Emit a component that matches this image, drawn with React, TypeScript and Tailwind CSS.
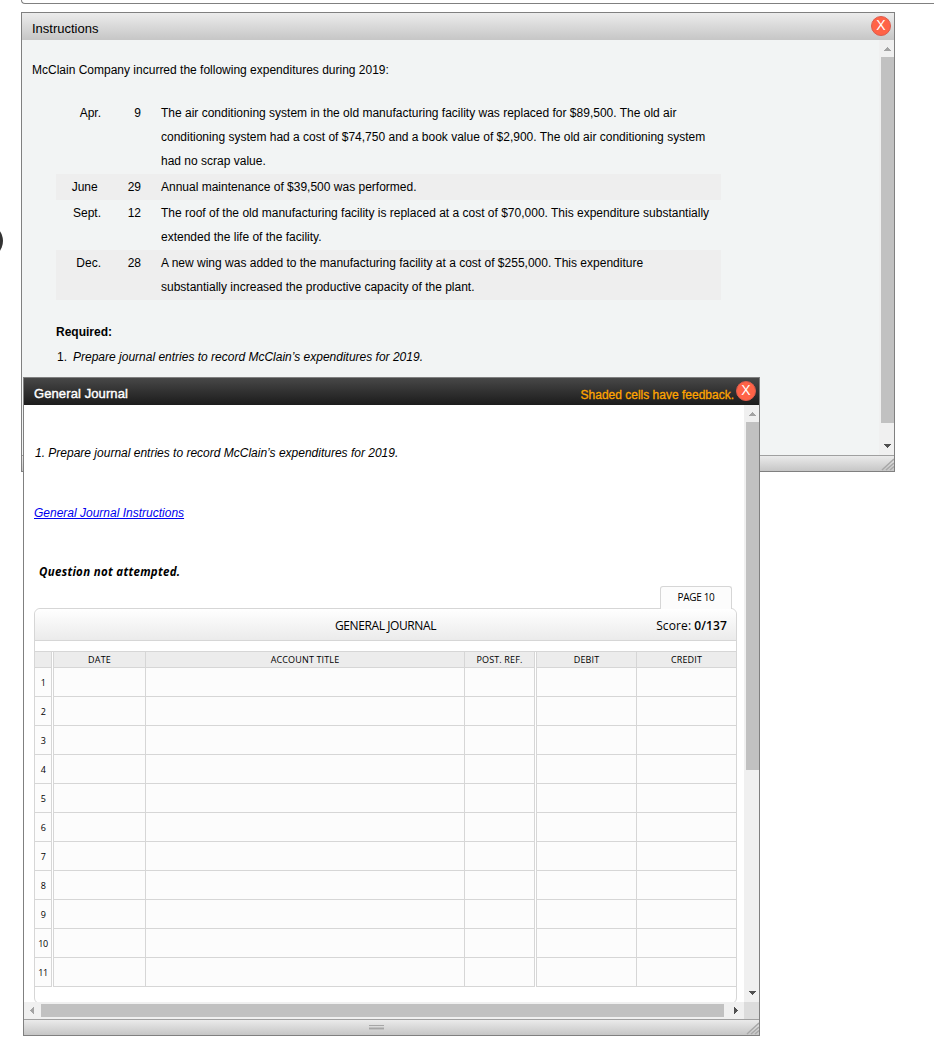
import type { ReactNode } from 'react';
import clsx from 'clsx';

interface Expenditure {
  month: string;
  day: string;
  lines: string[];
  shaded?: boolean;
}

const expenditures: Expenditure[] = [
  {
    month: 'Apr.',
    day: '9',
    lines: [
      'The air conditioning system in the old manufacturing facility was replaced for $89,500. The old air',
      'conditioning system had a cost of $74,750 and a book value of $2,900. The old air conditioning system',
      'had no scrap value.',
    ],
  },
  {
    month: 'June\u00a0',
    day: '29',
    shaded: true,
    lines: ['Annual maintenance of $39,500 was performed.'],
  },
  {
    month: 'Sept.',
    day: '12',
    lines: [
      'The roof of the old manufacturing facility is replaced at a cost of $70,000. This expenditure substantially',
      'extended the life of the facility.',
    ],
  },
  {
    month: 'Dec.',
    day: '28',
    shaded: true,
    lines: [
      'A new wing was added to the manufacturing facility at a cost of $255,000. This expenditure',
      'substantially increased the productive capacity of the plant.',
    ],
  },
];

const journalRows = Array.from({ length: 11 }, (_, i) => i + 1);

function CloseButton() {
  return (
    <button className="mb-0.5 flex size-5 shrink-0 items-center justify-center rounded-full border border-[#dc5b4d] bg-[#ff6347] pb-px text-[14px] leading-none text-white">
      X
    </button>
  );
}

function Arrow({ direction, muted }: { direction: 'up' | 'down' | 'left' | 'right'; muted?: boolean }) {
  const points = {
    up: '0,4 3.5,0 7,4',
    down: '0,0 7,0 3.5,4',
    left: '4,0 4,7 0,3.5',
    right: '0,0 4,3.5 0,7',
  };
  const vertical = direction === 'up' || direction === 'down';
  return (
    <svg
      width={vertical ? 7 : 4}
      height={vertical ? 4 : 7}
      className={clsx('block', muted ? 'fill-[#a3a3a3]' : 'fill-[#505050]')}
      shapeRendering="crispEdges"
    >
      <polygon points={points[direction]} />
    </svg>
  );
}

function VerticalScrollbar({ thumb }: { thumb: string }) {
  return (
    <div className="flex w-[15px] shrink-0 flex-col bg-[#f0f0f0] pl-0.5">
      <div className="flex h-[17px] shrink-0 justify-center pt-[7px]">
        <Arrow direction="up" muted />
      </div>
      <div className={clsx('bg-[#c1c1c1]', thumb)} />
      <div className="mt-auto flex h-[11px] shrink-0 justify-center">
        <Arrow direction="down" />
      </div>
    </div>
  );
}

function WindowFooter({ handle }: { handle?: boolean }) {
  return (
    <div className="flex h-4 shrink-0 items-start border-t border-[#a0a0a0] bg-linear-to-b from-[#ebebeb] to-[#c6c6c6]">
      <div className="flex flex-1 justify-center pr-4 pt-[5px]">
        {handle && (
          <div className="flex h-[5px] w-[15px] flex-col justify-between">
            <div className="h-px bg-[#a6a6a6]" />
            <div className="h-[3px] border-y border-[#c0c0c0] bg-[#a6a6a6]" />
          </div>
        )}
      </div>
      <svg width="14" height="15" className="block" fill="none" stroke="#a8a8a8" strokeWidth="1.5">
        <path d="M2 14 L14 3 M6 14 L14 7 M10 14 L14 10.5" />
      </svg>
    </div>
  );
}

function GridRow({ cells, header }: { cells: ReactNode[]; header?: boolean }) {
  const cell = clsx('flex items-center justify-center border-b border-[#d6d6d6]', header ? 'bg-[#ececec]' : 'bg-[#fcfcfc]');
  return (
    <div className={clsx('grid grid-cols-[17px_1px_93px_319px_70px_1px_101px_99px]', header ? 'h-[17px] border-t border-[#d6d6d6] tracking-[0.15px]' : 'h-[29px] tracking-[-0.4px]')}>
      <div className={clsx(cell, 'border-r')}>{cells[0]}</div>
      <div />
      <div className={clsx(cell, 'border-x')}>{cells[1]}</div>
      <div className={clsx(cell, 'border-r')}>{cells[2]}</div>
      <div className={clsx(cell, 'border-r')}>{cells[3]}</div>
      <div />
      <div className={clsx(cell, 'border-x')}>{cells[4]}</div>
      <div className={cell}>{cells[5]}</div>
    </div>
  );
}

function InstructionsWindow() {
  return (
    <section className="absolute left-[21px] top-3 flex h-[460px] w-[874px] flex-col border border-[#808080] bg-[#f2f4f4]">
      <header className="flex h-[27px] shrink-0 items-center justify-between bg-linear-to-b from-[#ececec] to-[#c6c6c6] pl-2.5 pr-[3px]">
        <h2 className="mt-1 text-[13px]">Instructions</h2>
        <CloseButton />
      </header>
      <div className="flex min-h-0 flex-1">
        <div className="flex-1 overflow-hidden pl-2.5 pt-[18px] text-[12px] leading-6">
          <p>McClain Company incurred the following expenditures during 2019:</p>
          <div className="ml-6 mt-[18px] w-[665px]">
            {expenditures.map((item) => (
              <div
                key={item.month}
                className={clsx('grid grid-cols-[45px_40px_1fr] py-px', item.shaded && 'bg-[#eeeeee]')}
              >
                <div className="text-right">{item.month}</div>
                <div className="text-right">{item.day}</div>
                <div className="whitespace-nowrap pl-5">
                  {item.lines.map((line) => (
                    <p key={line}>{line}</p>
                  ))}
                </div>
              </div>
            ))}
          </div>
          <div className="ml-6 mt-5">
            <h3 className="font-bold">Required:</h3>
            <div className="mt-px flex gap-[6px] pl-px">
              <span>1.</span>
              <p className="italic">Prepare journal entries to record McClain’s expenditures for 2019.</p>
            </div>
          </div>
        </div>
        <VerticalScrollbar thumb="h-[366px]" />
      </div>
      <WindowFooter />
    </section>
  );
}

function GeneralJournal() {
  return (
    <div className="ml-2.5 w-[703px] font-['Open_Sans','Noto_Sans',sans-serif]">
      <div className="relative z-10 -mb-px ml-[626px] h-[23px] w-[72px] rounded-t-[3px] border border-b-0 border-[#d6d6d6] bg-[#fcfcfc] text-center text-[10px] leading-[21px] tracking-[-0.3px]">
        PAGE 10
      </div>
      <div className="h-[396px] rounded-md border border-[#d6d6d6] bg-white">
        <div className="grid h-8 grid-cols-3 rounded-t-md border-b border-[#d6d6d6] bg-linear-to-b from-white to-[#ebebeb] text-[12px] leading-[33px]">
          <div />
          <h3 className="text-center tracking-[-0.4px]">GENERAL JOURNAL</h3>
          <p className="pr-[9px] text-right tracking-[0.1px]">
            Score: <span className="font-semibold">0/137</span>
          </p>
        </div>
        <div className="mt-2.5 text-[9px] leading-none">
          <GridRow header cells={['', 'DATE', 'ACCOUNT TITLE', 'POST. REF.', 'DEBIT', 'CREDIT']} />
          {journalRows.map((n) => (
            <GridRow key={n} cells={[n]} />
          ))}
        </div>
      </div>
    </div>
  );
}

function JournalWindow() {
  return (
    <section className="absolute left-[23px] top-[377px] flex h-[659px] w-[737px] flex-col border border-[#808080] bg-white">
      <header className="flex h-[27px] shrink-0 items-center bg-linear-to-b from-[#484848] to-[#1c1c1c] pl-2.5 pr-[3px]">
        <h2 className="mt-1 text-[13px] tracking-[0.1px] text-white [-webkit-text-stroke:0.4px_#ffffff]">General Journal</h2>
        <p className="ml-auto mr-0.5 mt-[6px] text-[12px] text-[#ffa500] [-webkit-text-stroke:0.3px_#ffa500]">
          Shaded cells have feedback.
        </p>
        <CloseButton />
      </header>
      <div className="flex min-h-0 flex-1">
        <div className="flex min-w-0 flex-1 flex-col">
          <div className="min-h-0 flex-1 overflow-hidden text-[12px] leading-6">
            <p className="ml-[11px] mt-9 italic">1. Prepare journal entries to record McClain’s expenditures for 2019.</p>
            <a href="#" className="ml-2.5 mt-9 block italic text-[#0000ee] underline">
              General Journal Instructions
            </a>
            <p className="mb-0.5 ml-[15px] mt-[35px] font-['Open_Sans','Noto_Sans',sans-serif] text-[11.5px] font-bold italic leading-6 tracking-[0.3px]">
              Question not attempted.
            </p>
            <GeneralJournal />
          </div>
          <div className="flex h-[17px] shrink-0 items-center bg-[#f0f0f0]">
            <div className="flex w-[17px] justify-center pr-px">
              <Arrow direction="left" muted />
            </div>
            <div className="h-[13px] w-[683px] bg-[#c1c1c1]" />
            <div className="ml-auto mr-[6px]">
              <Arrow direction="right" />
            </div>
          </div>
        </div>
        <div className="flex flex-col">
          <div className="flex min-h-0 flex-1">
            <VerticalScrollbar thumb="h-[348px]" />
          </div>
          <div className="h-[17px] w-[15px] bg-[#dcdcdc]" />
        </div>
      </div>
      <WindowFooter handle />
    </section>
  );
}

export default function App() {
  return (
    <main className="relative h-[1058px] w-[934px] overflow-hidden bg-white font-['Liberation_Sans',Arial,sans-serif] text-black">
      <div className="ml-[21px] h-1 rounded-bl-[4px] border-b border-l border-[#808080]" />
      <div className="absolute -left-[31px] top-[224px] size-[34px] rounded-full bg-[#333333]" />
      <InstructionsWindow />
      <JournalWindow />
    </main>
  );
}
